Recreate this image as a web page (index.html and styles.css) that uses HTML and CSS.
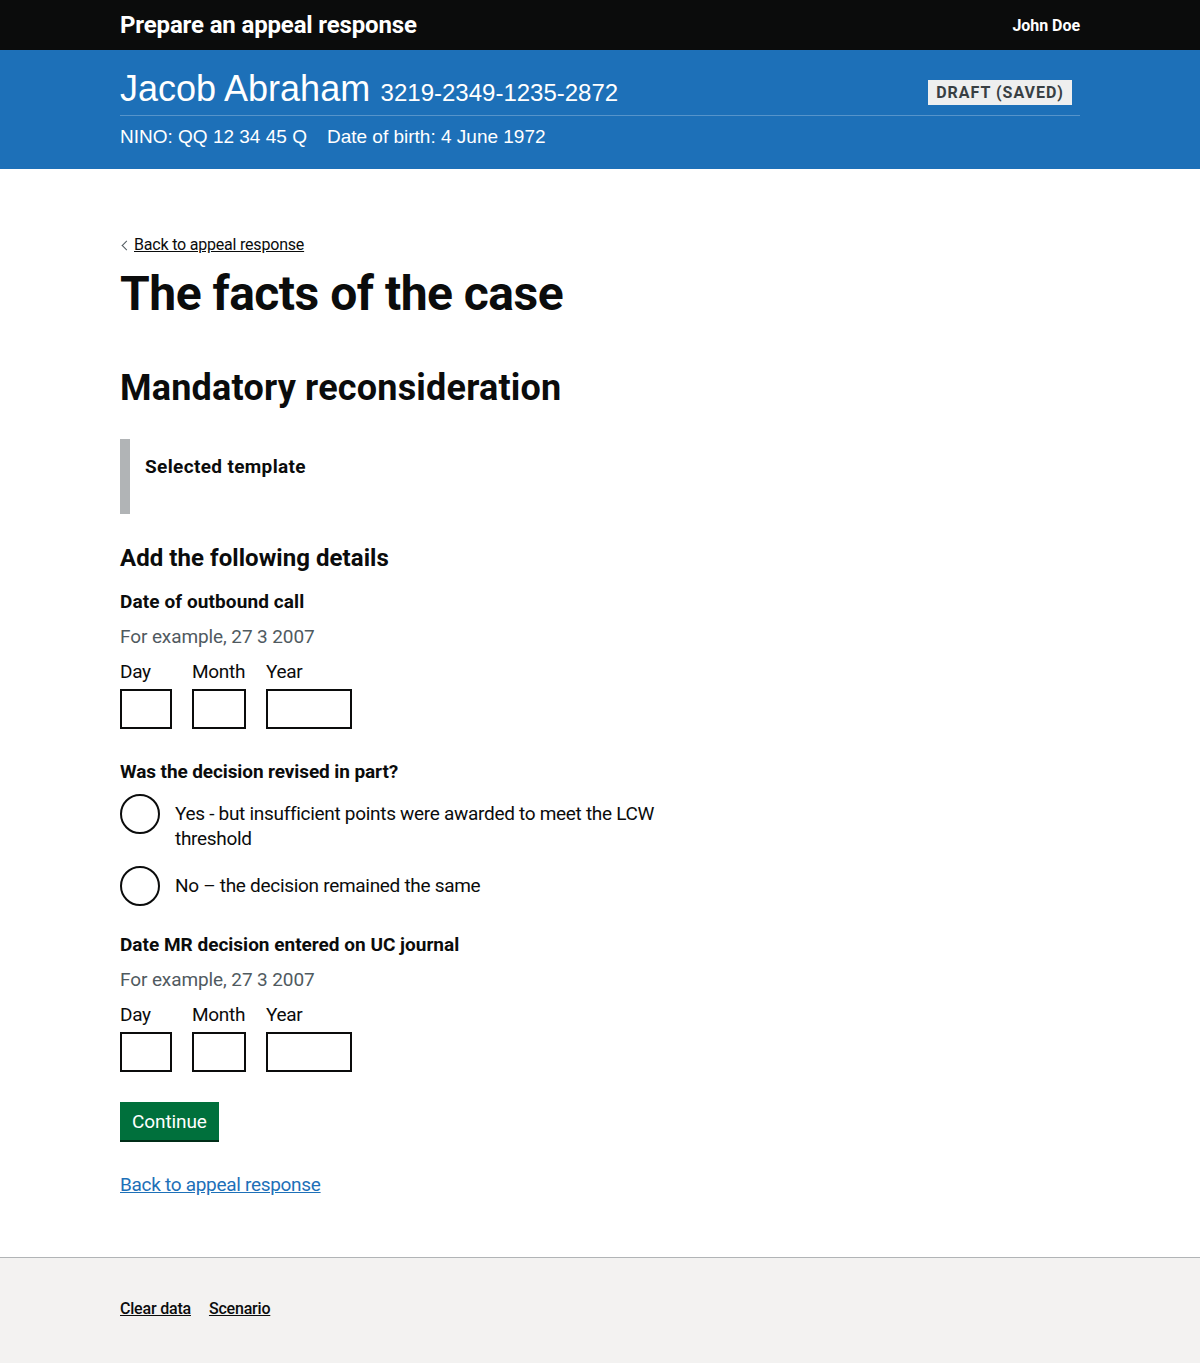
FILE: index.html
```html
<!DOCTYPE html>
<html lang="en">
<head>
<meta charset="utf-8">
<title>The facts of the case</title>
<link rel="stylesheet" href="styles.css">
</head>
<body>
<header class="topbar">
  <div class="container topbar-inner">
    <span class="service-name">Prepare an appeal response</span>
    <span class="user-name">John Doe</span>
  </div>
</header>
<div class="banner">
  <div class="container">
    <div class="banner-top">
      <div class="claimant"><span class="claimant-name">Jacob Abraham</span> <span class="claimant-ref">3219-2349-1235-2872</span></div>
      <strong class="tag">DRAFT (SAVED)</strong>
    </div>
    <div class="banner-meta">
      <span>NINO: QQ 12 34 45 Q</span>
      <span>Date of birth: 4 June 1972</span>
    </div>
  </div>
</div>
<main class="container main">
  <a class="back-link" href="#">Back to appeal response</a>
  <h1 class="h1">The facts of the case</h1>
  <h2 class="h2">Mandatory reconsideration</h2>
  <div class="inset"><strong>Selected template</strong></div>
  <h3 class="h3">Add the following details</h3>

  <div class="form-group">
    <div class="label-bold">Date of outbound call</div>
    <div class="hint">For example, 27 3 2007</div>
    <div class="date-input">
      <div class="date-item"><label>Day</label><input class="input w-day" type="text"></div>
      <div class="date-item"><label>Month</label><input class="input w-month" type="text"></div>
      <div class="date-item"><label>Year</label><input class="input w-year" type="text"></div>
    </div>
  </div>

  <div class="form-group form-group-radios">
    <div class="label-bold">Was the decision revised in part?</div>
    <div class="radios">
      <div class="radio"><span class="radio-circle"></span><span class="radio-label">Yes - but insufficient points were awarded to meet the LCW threshold</span></div>
      <div class="radio"><span class="radio-circle"></span><span class="radio-label">No – the decision remained the same</span></div>
    </div>
  </div>

  <div class="form-group">
    <div class="label-bold label-mr">Date MR decision entered on UC journal</div>
    <div class="hint">For example, 27 3 2007</div>
    <div class="date-input">
      <div class="date-item"><label>Day</label><input class="input w-day" type="text"></div>
      <div class="date-item"><label>Month</label><input class="input w-month" type="text"></div>
      <div class="date-item"><label>Year</label><input class="input w-year" type="text"></div>
    </div>
  </div>

  <button class="button" type="button">Continue</button>
  <p class="bottom-link"><a href="#">Back to appeal response</a></p>
</main>
<footer class="footer">
  <div class="container footer-inner">
    <a href="#">Clear data</a>
    <a href="#">Scenario</a>
  </div>
</footer>
</body>
</html>
```

FILE: styles.css
```css
* { box-sizing: border-box; }
body {
  margin: 0;
  font-family: "Roboto", "Liberation Sans", Arial, sans-serif;
  color: #0b0c0c;
  background: #fff;
}
.container {
  width: 960px;
  margin: 0 auto;
}
.topbar {
  background: #0b0c0c;
  color: #fff;
  height: 50px;
}
.topbar-inner {
  display: flex;
  justify-content: space-between;
  align-items: center;
  height: 50px;
}
.service-name {
  font-weight: 700;
  font-size: 24px;
  letter-spacing: -0.15px;
}
.user-name {
  font-weight: 700;
  font-size: 16px;
  letter-spacing: -0.05px;
}
.banner {
  background: #1d70b8;
  color: #fff;
  height: 119px;
  font-family: "Liberation Sans", Arial, sans-serif;
}
.banner-top {
  display: flex;
  justify-content: space-between;
  align-items: center;
  padding-top: 20px;
  height: 66px;
  border-bottom: 1px solid #5694ca;
}
.claimant { line-height: 40px; }
.claimant-name { font-size: 36px; }
.claimant-ref { font-size: 24px; margin-left: 6px; }
.tag {
  background: #eeefef;
  color: #383f43;
  font-family: "Roboto", "Liberation Sans", Arial, sans-serif;
  font-weight: 700;
  font-size: 16px;
  letter-spacing: 1px;
  padding: 3px 8px 2px;
  margin-right: 8px;
  margin-top: 0;
  height: 25px;
  line-height: 20px;
}
.banner-meta {
  font-size: 19px;
  padding-top: 10px;
  display: flex;
  gap: 20px;
}
.main {
  padding-top: 65px;
  padding-bottom: 60px;
}
.back-link {
  display: inline-block;
  position: relative;
  padding-left: 14px;
  font-size: 16px;
  line-height: 22px;
  color: #0b0c0c;
  text-decoration: underline;
  letter-spacing: -0.2px;
}
.back-link::before {
  content: "";
  position: absolute;
  left: 3px;
  top: 8px;
  width: 6px;
  height: 6px;
  border-left: 1px solid #505a5f;
  border-bottom: 1px solid #505a5f;
  transform: rotate(45deg);
}
.h1 {
  font-size: 48px;
  line-height: 50px;
  font-weight: 700;
  margin: 13px 0 49px;
  letter-spacing: -0.5px;
}
.h2 {
  font-size: 36px;
  line-height: 40px;
  font-weight: 700;
  margin: 0 0 31px;
  letter-spacing: 0.2px;
}
.inset {
  border-left: 10px solid #b1b4b6;
  padding: 15px 15px 35px;
  font-size: 19px;
  line-height: 25px;
  margin-bottom: 29px;
  letter-spacing: 0.35px;
}
.h3 {
  font-size: 24px;
  line-height: 30px;
  font-weight: 700;
  margin: 0 0 16px;
  letter-spacing: 0.05px;
}
.form-group { margin-bottom: 30px; }
.form-group-radios { margin-bottom: 26px; }
.label-bold {
  font-size: 19px;
  font-weight: 700;
  line-height: 25px;
  margin-bottom: 10px;
  letter-spacing: 0.1px;
}
.label-mr { letter-spacing: 0; }
.form-group-radios .label-bold { letter-spacing: -0.1px; }
.hint {
  font-size: 19px;
  line-height: 25px;
  color: #505a5f;
  margin-bottom: 10px;
  letter-spacing: -0.1px;
}
.date-input {
  display: flex;
  gap: 20px;
}
.date-item {
  display: flex;
  flex-direction: column;
}
.date-item label {
  font-size: 19px;
  line-height: 25px;
  margin-bottom: 5px;
  letter-spacing: -0.3px;
}
.input {
  height: 40px;
  border: 2px solid #0b0c0c;
  border-radius: 0;
  padding: 5px;
  font-size: 19px;
  background: #fff;
}
.w-day { width: 52px; }
.w-month { width: 54px; }
.w-year { width: 86px; }
.radios { display: flex; flex-direction: column; gap: 15px; }
.radio {
  display: flex;
  align-items: flex-start;
  min-height: 40px;
}
.radio-circle {
  flex: none;
  width: 40px;
  height: 40px;
  border: 2px solid #0b0c0c;
  border-radius: 50%;
  margin-right: 15px;
}
.radio-label {
  font-size: 19px;
  line-height: 25px;
  padding-top: 7px;
  max-width: 490px;
  letter-spacing: -0.3px;
}
.button {
  display: block;
  background: #00703c;
  color: #fff;
  border: 0;
  box-shadow: 0 2px 0 #002d18;
  font-family: inherit;
  font-size: 19px;
  line-height: 19px;
  padding: 9px 12px 9px;
  height: 38px;
  margin: 0 0 32px;
  letter-spacing: -0.1px;
}
.bottom-link {
  margin: 0;
  font-size: 19px;
  line-height: 25px;
  letter-spacing: -0.3px;
}
.bottom-link a { color: #1d70b8; text-decoration: underline; }
.footer {
  background: #f3f2f1;
  border-top: 1px solid #b1b4b6;
  height: 106px;
}
.footer-inner {
  display: flex;
  gap: 18px;
  padding-top: 41px;
}
.footer a {
  color: #0b0c0c;
  font-size: 16px;
  font-weight: 500;
  line-height: 20px;
  text-decoration: underline;
  letter-spacing: -0.2px;
}
```
